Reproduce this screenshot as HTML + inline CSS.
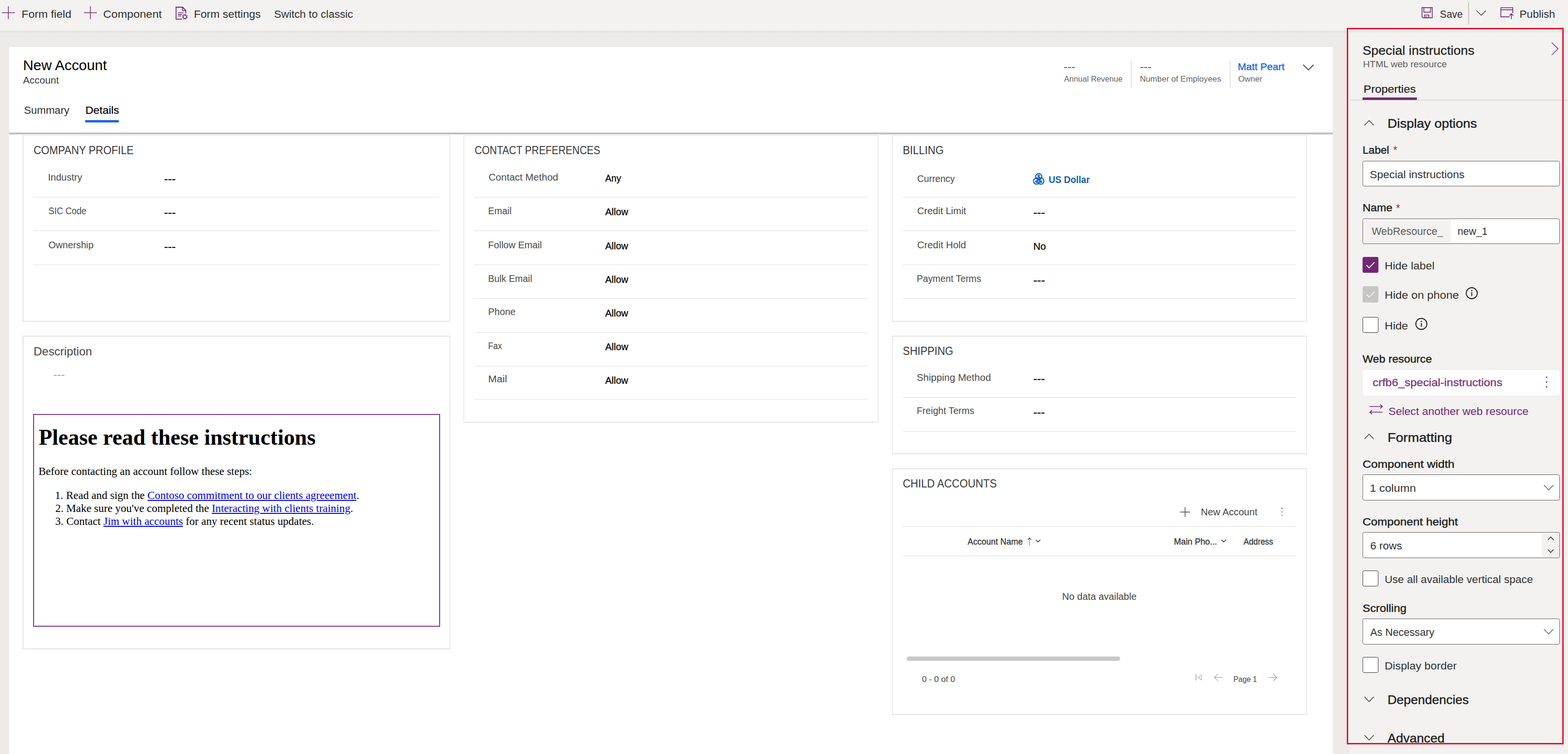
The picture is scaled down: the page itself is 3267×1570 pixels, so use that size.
<!DOCTYPE html>
<html lang="en"><head><meta charset="utf-8"><title>Form designer - New Account</title>
<style>
html,body{margin:0;padding:0;}
body{width:3267px;height:1570px;background:#fff;font-family:"Liberation Sans", sans-serif;position:relative;}
.b{position:absolute;box-sizing:border-box;}
.t{position:absolute;white-space:pre;transform-origin:0 50%;}
.i{position:absolute;overflow:visible;}
.t a{color:#0000ee;text-decoration:underline;}
</style></head>
<body>
<div class="b" style="left:0px;top:0px;width:3267px;height:1570px;background:#edebe9;"></div>
<div class="b" style="left:19px;top:98px;width:2758px;height:1472px;background:#ffffff;"></div>
<div class="b" style="left:2811px;top:64px;width:456px;height:1506px;background:#f3f2f1;"></div>
<div class="b" style="left:0px;top:64px;width:3267px;height:7px;background:linear-gradient(#e2e1df,#edebe9);"></div>
<div class="b" style="left:2811px;top:64px;width:456px;height:7px;background:linear-gradient(#e9e8e6,#f3f2f1);"></div>
<div class="b" style="left:0px;top:0px;width:3267px;height:64px;background:#f3f2f1;"></div>
<div class="b" style="left:19px;top:276px;width:2758px;height:5px;background:linear-gradient(#c2c2c2 0%,#b6b6b6 30%,#cfcfcf 60%,#f2f2f2 100%);"></div>
<div class="b" style="left:3059px;top:4px;width:2px;height:47px;background:#c8c6c4;"></div>
<div class="b" style="left:177.3px;top:250.3px;width:71.1px;height:4.8px;background:#2266e3;border-radius:2.4px;"></div>
<div class="b" style="left:2356px;top:126px;width:2px;height:56px;background:#e2e2e2;"></div>
<div class="b" style="left:2562px;top:126px;width:2px;height:56px;background:#e2e2e2;"></div>
<div class="b" style="left:47px;top:282px;width:891px;height:1px;background:#e6e5e4;"></div>
<div class="b" style="left:47px;top:668px;width:891px;height:2px;background:#e6e5e4;"></div>
<div class="b" style="left:47px;top:282px;width:2px;height:388px;background:#e2e2e2;"></div>
<div class="b" style="left:937px;top:282px;width:1px;height:388px;background:#d9d9d9;"></div>
<div class="b" style="left:69.3px;top:410px;width:846.7px;height:1px;background:#dedede;"></div>
<div class="b" style="left:69.3px;top:480px;width:846.7px;height:1px;background:#dedede;"></div>
<div class="b" style="left:69.3px;top:551px;width:846.7px;height:1px;background:#dedede;"></div>
<div class="b" style="left:47px;top:699px;width:891px;height:2px;background:#e6e5e4;"></div>
<div class="b" style="left:47px;top:1350px;width:891px;height:2px;background:#e6e5e4;"></div>
<div class="b" style="left:47px;top:699px;width:2px;height:653px;background:#e2e2e2;"></div>
<div class="b" style="left:937px;top:699px;width:1px;height:653px;background:#d9d9d9;"></div>
<div class="b" style="left:69px;top:862px;width:848px;height:443px;background:#fff;border:2px solid #7b3a80;"></div>
<div class="b" style="left:966px;top:282px;width:864px;height:1px;background:#e6e5e4;"></div>
<div class="b" style="left:966px;top:878px;width:864px;height:2px;background:#e6e5e4;"></div>
<div class="b" style="left:966px;top:282px;width:1px;height:598px;background:#d9d9d9;"></div>
<div class="b" style="left:1829px;top:282px;width:1px;height:598px;background:#d9d9d9;"></div>
<div class="b" style="left:988.2px;top:410px;width:820px;height:1px;background:#dedede;"></div>
<div class="b" style="left:988.2px;top:480px;width:820px;height:1px;background:#dedede;"></div>
<div class="b" style="left:988.2px;top:551px;width:820px;height:1px;background:#dedede;"></div>
<div class="b" style="left:988.2px;top:621px;width:820px;height:1px;background:#dedede;"></div>
<div class="b" style="left:988.2px;top:692px;width:820px;height:1px;background:#dedede;"></div>
<div class="b" style="left:988.2px;top:762px;width:820px;height:1px;background:#dedede;"></div>
<div class="b" style="left:988.2px;top:831px;width:820px;height:1px;background:#dedede;"></div>
<div class="b" style="left:1859px;top:282px;width:864px;height:1px;background:#e6e5e4;"></div>
<div class="b" style="left:1859px;top:668px;width:864px;height:2px;background:#e6e5e4;"></div>
<div class="b" style="left:1859px;top:282px;width:1px;height:388px;background:#d9d9d9;"></div>
<div class="b" style="left:2722px;top:282px;width:1px;height:388px;background:#d9d9d9;"></div>
<div class="b" style="left:1881px;top:410px;width:820px;height:1px;background:#dedede;"></div>
<div class="b" style="left:1881px;top:480px;width:820px;height:1px;background:#dedede;"></div>
<div class="b" style="left:1881px;top:551px;width:820px;height:1px;background:#dedede;"></div>
<div class="b" style="left:1881px;top:621px;width:820px;height:1px;background:#dedede;"></div>
<div class="b" style="left:1859px;top:699px;width:864px;height:2px;background:#e6e5e4;"></div>
<div class="b" style="left:1859px;top:944px;width:864px;height:2px;background:#e6e5e4;"></div>
<div class="b" style="left:1859px;top:699px;width:1px;height:247px;background:#d9d9d9;"></div>
<div class="b" style="left:2722px;top:699px;width:1px;height:247px;background:#d9d9d9;"></div>
<div class="b" style="left:1881px;top:827px;width:820px;height:1px;background:#dedede;"></div>
<div class="b" style="left:1881px;top:898px;width:820px;height:1px;background:#dedede;"></div>
<div class="b" style="left:1859px;top:975px;width:864px;height:2px;background:#e6e5e4;"></div>
<div class="b" style="left:1859px;top:1487px;width:864px;height:2px;background:#e6e5e4;"></div>
<div class="b" style="left:1859px;top:975px;width:1px;height:514px;background:#d9d9d9;"></div>
<div class="b" style="left:2722px;top:975px;width:1px;height:514px;background:#d9d9d9;"></div>
<div class="b" style="left:2669.8px;top:1057.4px;width:2.4px;height:2.4px;background:#444;border-radius:1.2px;"></div>
<div class="b" style="left:2669.8px;top:1064.7px;width:2.4px;height:2.4px;background:#444;border-radius:1.2px;"></div>
<div class="b" style="left:2669.8px;top:1072px;width:2.4px;height:2.4px;background:#444;border-radius:1.2px;"></div>
<div class="b" style="left:1881px;top:1096px;width:820px;height:1px;background:#dedede;"></div>
<div class="b" style="left:1881px;top:1157px;width:820px;height:1px;background:#dedede;"></div>
<div class="b" style="left:1889.3px;top:1367px;width:445px;height:9px;background:#c8c8c8;border-radius:4.5px;"></div>
<div class="b" style="left:2812px;top:207.6px;width:455px;height:1.4px;background:#c8c6c4;"></div>
<div class="b" style="left:2839.2px;top:203.1px;width:112.7px;height:4.7px;background:#742774;"></div>
<div class="b" style="left:2839px;top:335px;width:411px;height:53px;background:#fff;border:1.7px solid #605e5c;border-radius:3.5px;"></div>
<div class="b" style="left:2839px;top:455px;width:411px;height:53px;background:#fff;border:1.7px solid #605e5c;border-radius:3.5px;"></div>
<div class="b" style="left:2840.7px;top:456.7px;width:182px;height:49.6px;background:#f3f2f1;border-radius:2px;"></div>
<div class="b" style="left:2839px;top:535px;width:33px;height:33px;background:#742774;border-radius:3.5px;"></div>
<div class="b" style="left:2839px;top:596px;width:33px;height:34px;background:#c8c6c4;border-radius:3.5px;"></div>
<div class="b" style="left:2839px;top:660px;width:33px;height:33px;background:#fff;border:1.5px solid #323130;border-radius:3.5px;"></div>
<div class="b" style="left:2839.4px;top:769.7px;width:410.3px;height:54.6px;background:#fff;border-radius:5px;box-shadow:0 0 2px rgba(0,0,0,.12);"></div>
<div class="b" style="left:3220.7px;top:783.6px;width:3.4px;height:3.4px;background:#742774;border-radius:1.7px;"></div>
<div class="b" style="left:3220.7px;top:793.7px;width:3.4px;height:3.4px;background:#742774;border-radius:1.7px;"></div>
<div class="b" style="left:3220.7px;top:803.7px;width:3.4px;height:3.4px;background:#742774;border-radius:1.7px;"></div>
<div class="b" style="left:2839px;top:988.3px;width:411px;height:53.5px;background:#fff;border:1.7px solid #605e5c;border-radius:3.5px;"></div>
<div class="b" style="left:2839px;top:1108.2px;width:411px;height:53.5px;background:#fff;border:1.7px solid #605e5c;border-radius:3.5px;"></div>
<div class="b" style="left:3212px;top:1109.9px;width:36.3px;height:50.1px;background:#f3f2f1;border-radius:2px;"></div>
<div class="b" style="left:2839px;top:1188px;width:33px;height:33px;background:#fff;border:1.5px solid #323130;border-radius:3.5px;"></div>
<div class="b" style="left:2839px;top:1288px;width:411px;height:53.5px;background:#fff;border:1.7px solid #605e5c;border-radius:3.5px;"></div>
<div class="b" style="left:2839px;top:1368px;width:33px;height:33px;background:#fff;border:1.5px solid #323130;border-radius:3.5px;"></div>
<div class="b" style="left:2809px;top:64px;width:1px;height:1506px;background:#f6f6f5;"></div>
<div class="b" style="left:2810px;top:64px;width:1px;height:1506px;background:#e3e2e0;"></div>
<div class="b" style="left:2806px;top:58px;width:452px;height:1492px;border:3px solid #ec1030;z-index:5"></div>
<svg class="i" style="left:4.2px;top:13px" width="26.8" height="26.8" viewBox="0 0 26.8 26.8" ><path d="M13.4 0V26.8M0 13.4H26.8" stroke="#742774" stroke-width="1.5" fill="none"/></svg>
<svg class="i" style="left:175px;top:13px" width="26.8" height="26.8" viewBox="0 0 26.8 26.8" ><path d="M13.4 0V26.8M0 13.4H26.8" stroke="#742774" stroke-width="1.5" fill="none"/></svg>
<svg class="i" style="left:2458.9px;top:1055.5px" width="20.4" height="20.4" viewBox="0 0 20.4 20.4" ><path d="M10.2 0V20.4M0 10.2H20.4" stroke="#444" stroke-width="1.4" fill="none"/></svg>
<svg class="i" style="left:2842.6px;top:250.7px" width="19.2" height="10" viewBox="0 0 19.2 10" ><path d="M0 10.0L9.600000000000136 0L19.200000000000273 10.0" stroke="#323130" stroke-width="1.3" fill="none"/></svg>
<svg class="i" style="left:2839px;top:535px" width="33" height="33" viewBox="0 0 33 33" ><path d="M8.2 17.2L13.6 22.6L24.8 11.2" stroke="#fff" stroke-width="2" fill="none"/></svg>
<svg class="i" style="left:2839px;top:596px" width="33" height="33" viewBox="0 0 33 33" ><path d="M8.2 17.2L13.6 22.6L24.8 11.2" stroke="#f3f2f1" stroke-width="2" fill="none"/></svg>
<svg class="i" style="left:3054px;top:598px" width="25" height="25" viewBox="0 0 25 25" ><circle cx="12.5" cy="12.5" r="11.5" stroke="#111" stroke-width="1.8" fill="none"/><path d="M12.5 10.5V18.5" stroke="#111" stroke-width="1.9" fill="none"/><circle cx="12.5" cy="7.3" r="1.3" fill="#111"/></svg>
<svg class="i" style="left:2948.6px;top:662.1px" width="25" height="25" viewBox="0 0 25 25" ><circle cx="12.5" cy="12.5" r="11.5" stroke="#111" stroke-width="1.8" fill="none"/><path d="M12.5 10.5V18.5" stroke="#111" stroke-width="1.9" fill="none"/><circle cx="12.5" cy="7.3" r="1.3" fill="#111"/></svg>
<svg class="i" style="left:2842.6px;top:904px" width="19.2" height="10" viewBox="0 0 19.2 10" ><path d="M0 10L9.600000000000136 0L19.200000000000273 10" stroke="#323130" stroke-width="1.3" fill="none"/></svg>
<svg class="i" style="left:3217.3px;top:1009.8px" width="19.5" height="10.2" viewBox="0 0 19.5 10.2" ><path d="M0 0L9.75 10.200000000000045L19.5 0" stroke="#605e5c" stroke-width="1.5" fill="none"/></svg>
<svg class="i" style="left:3225.1px;top:1117.6px" width="12" height="6.4" viewBox="0 0 12 6.4" ><path d="M0 6.400000000000091L6.0 0L12.0 6.400000000000091" stroke="#444" stroke-width="1.8" fill="none"/></svg>
<svg class="i" style="left:3225.1px;top:1143.8px" width="12" height="6.4" viewBox="0 0 12 6.4" ><path d="M0 0L6.0 6.400000000000091L12.0 0" stroke="#444" stroke-width="1.8" fill="none"/></svg>
<svg class="i" style="left:3217.3px;top:1310px" width="19.5" height="10.2" viewBox="0 0 19.5 10.2" ><path d="M0 0L9.75 10.200000000000045L19.5 0" stroke="#605e5c" stroke-width="1.5" fill="none"/></svg>
<svg class="i" style="left:2842.6px;top:1451.3px" width="19.2" height="10" viewBox="0 0 19.2 10" ><path d="M0 0L9.600000000000136 10.0L19.200000000000273 0" stroke="#323130" stroke-width="1.3" fill="none"/></svg>
<svg class="i" style="left:2842.6px;top:1531px" width="19.2" height="10" viewBox="0 0 19.2 10" ><path d="M0 0L9.600000000000136 10L19.200000000000273 0" stroke="#323130" stroke-width="1.3" fill="none"/></svg>
<svg class="i" style="left:0;top:0" width="3267" height="1570" viewBox="0 0 3267 1570"><path d="M379.3 39.9H366.8V15H380.6L387.1 21.6V27.7 M380.4 15V21.9H387.1" stroke="#742774" stroke-width="1.8" fill="none" /><path d="M370.8 26.5H382.6M370.8 30.1H378.8M370.8 33.3H377.5" stroke="#742774" stroke-width="1.6" fill="none" /><circle cx="385.2" cy="35.0" r="3.4" stroke="#742774" stroke-width="1.5" fill="#f3f2f1"/><path d="M388.53 36.38L390.84 37.33M386.58 38.33L387.53 40.64M383.82 38.33L382.87 40.64M381.87 36.38L379.56 37.33M381.87 33.62L379.56 32.67M383.82 31.67L382.87 29.36M386.58 31.67L387.53 29.36M388.53 33.62L390.84 32.67" stroke="#742774" stroke-width="1.7" fill="none" /><path d="M2964.6 37.1L2962.8 35.3V15.9H2984.2V37.1Z" stroke="#742774" stroke-width="1.6" fill="none" /><path d="M2966.6 15.9V25.4H2980.6V15.9" stroke="#742774" stroke-width="1.6" fill="none" /><path d="M2968.3 37.1V31.2H2977V37.1M2971.3 37.1V33.6" stroke="#742774" stroke-width="1.6" fill="none" /><path d="M3076.4 22.3L3086.2 31.7L3095.9 22.3" stroke="#3b3a39" stroke-width="1.5" fill="none" /><path d="M3145.6 35.1H3127.1V16H3151.8V27.6M3127.1 20.4H3151.8" stroke="#742774" stroke-width="1.6" fill="none" /><path d="M3149 39.8V28.8M3145 32.6L3149 28.6L3153 32.6" stroke="#742774" stroke-width="1.6" fill="none" /><path d="M2715.2 134.8L2726.1 145.6L2737 134.8" stroke="#333" stroke-width="1.8" fill="none" /><path d="M3233 88.6L3246.4 101.5L3233 114.4" stroke="#742774" stroke-width="1.4" fill="none" /><circle cx="2164.3" cy="367.8" r="6.4" stroke="#115ebb" stroke-width="2.2" fill="none"/><circle cx="2159.8" cy="377.1" r="6.4" stroke="#115ebb" stroke-width="2.2" fill="none"/><circle cx="2168.8" cy="377.1" r="6.4" stroke="#115ebb" stroke-width="2.2" fill="none"/><text x="2164.3" y="371.6" font-size="11" font-weight="700" text-anchor="middle" fill="#115ebb" stroke="#115ebb" stroke-width="0.4" font-family="Liberation Sans, sans-serif">$</text><text x="2159.6" y="380.6" font-size="9.5" font-weight="700" text-anchor="middle" fill="#115ebb" stroke="#115ebb" stroke-width="0.5" font-family="Liberation Sans, sans-serif">€</text><text x="2169" y="380.6" font-size="9.5" font-weight="700" text-anchor="middle" fill="#115ebb" stroke="#115ebb" stroke-width="0.5" font-family="Liberation Sans, sans-serif">¥</text><path d="M2853.8 846.5H2880.3M2875.6 842.4L2880.3 846.5L2875.6 850.6" stroke="#6b1f6e" stroke-width="1.6" fill="none" /><path d="M2880.7 858.3H2854.2M2858.9 854.2L2854.2 858.3L2858.9 862.4" stroke="#6b1f6e" stroke-width="1.6" fill="none" /><path d="M2144.9 1135.7V1121" stroke="#a0a0a0" stroke-width="1.7" fill="none" /><path d="M2141.2 1124L2144.9 1120.4L2148.6 1124" stroke="#555" stroke-width="1.5" fill="none" /><path d="M2158.2 1124L2162.8 1128.4L2167.4 1124" stroke="#555" stroke-width="1.9" fill="none" /><path d="M2544.6 1124L2549.7 1128.4L2554.7 1124" stroke="#555" stroke-width="1.9" fill="none" /><path d="M2491.8 1404.2V1416.8" stroke="#b4b4b4" stroke-width="2" fill="none" /><path d="M2503.6 1405.2L2496.3 1410.5L2503.6 1415.8Z" stroke="#b0b0b0" stroke-width="1.3" fill="none" /><path d="M2546.7 1410.5H2530.2M2537.9 1403.1L2530.2 1410.5L2537.9 1417.9" stroke="#a6a6a6" stroke-width="1.3" fill="none" /><path d="M2643.7 1410.5H2660.3M2652.6 1403.1L2660.3 1410.5L2652.6 1417.9" stroke="#a6a6a6" stroke-width="1.3" fill="none" /></svg>
<span class="t" style="left:44.89px;top:20.15px;font-size:21.5px;line-height:21.5px;color:#323130;transform:scaleX(1.0860);">Form field</span>
<span class="t" style="left:215.12px;top:19.62px;font-size:21.5px;line-height:21.5px;color:#323130;transform:scaleX(1.0984);">Component</span>
<span class="t" style="left:404.24px;top:19.54px;font-size:21.5px;line-height:21.5px;color:#323130;transform:scaleX(1.0698);">Form settings</span>
<span class="t" style="left:571.07px;top:19.67px;font-size:21.5px;line-height:21.5px;color:#323130;transform:scaleX(1.0434);">Switch to classic</span>
<span class="t" style="left:3000.00px;top:19.61px;font-size:21.5px;line-height:21.5px;color:#323130;transform:scaleX(0.9695);">Save</span>
<span class="t" style="left:3165.90px;top:19.53px;font-size:21.5px;line-height:21.5px;color:#323130;transform:scaleX(1.0518);">Publish</span>
<span class="t" style="left:48.01px;top:120.12px;font-size:30.4px;line-height:30.4px;color:#000;transform:scaleX(0.9842);">New Account</span>
<span class="t" style="left:47.90px;top:157.85px;font-size:19.5px;line-height:19.5px;color:#3c3c3c;transform:scaleX(1.0598);">Account</span>
<span class="t" style="left:49.66px;top:218.80px;font-size:21.9px;line-height:21.9px;color:#333;transform:scaleX(1.0096);">Summary</span>
<span class="t" style="left:178.15px;top:218.98px;font-size:21.9px;line-height:21.9px;color:#000;transform:scaleX(1.0489);-webkit-text-stroke:0.2px #000;">Details</span>
<span class="t" style="left:2216.28px;top:131.94px;font-size:16px;line-height:16px;color:#000;transform:scaleX(1.5310);">---</span>
<span class="t" style="left:2216.80px;top:155.79px;font-size:17px;line-height:17px;color:#666;transform:scaleX(0.9700);">Annual Revenue</span>
<span class="t" style="left:2374.87px;top:131.74px;font-size:16px;line-height:16px;color:#000;transform:scaleX(1.5145);">---</span>
<span class="t" style="left:2375.08px;top:155.61px;font-size:17px;line-height:17px;color:#666;transform:scaleX(1.0063);">Number of Employees</span>
<span class="t" style="left:2579.24px;top:128.81px;font-size:20.3px;line-height:20.3px;color:#1164eb;transform:scaleX(1.0403);-webkit-text-stroke:0.35px #1164eb;">Matt Peart</span>
<span class="t" style="left:2580.08px;top:155.52px;font-size:17px;line-height:17px;color:#666;transform:scaleX(1.0032);">Owner</span>
<span class="t" style="left:70.06px;top:302.47px;font-size:23.3px;line-height:23.3px;color:#3a3a3a;transform:scaleX(0.9398);">COMPANY PROFILE</span>
<span class="t" style="left:99.86px;top:360.33px;font-size:19.6px;line-height:19.6px;color:#4a4a4a;transform:scaleX(1.0219);">Industry</span>
<span class="t" style="left:341.64px;top:362.39px;font-size:22px;line-height:22px;color:#000;transform:scaleX(1.0884);-webkit-text-stroke:0.35px #000;">---</span>
<span class="t" style="left:100.71px;top:430.41px;font-size:19.6px;line-height:19.6px;color:#4a4a4a;transform:scaleX(0.9290);">SIC Code</span>
<span class="t" style="left:341.64px;top:432.39px;font-size:22px;line-height:22px;color:#000;transform:scaleX(1.0884);-webkit-text-stroke:0.35px #000;">---</span>
<span class="t" style="left:100.51px;top:500.73px;font-size:19.6px;line-height:19.6px;color:#4a4a4a;transform:scaleX(1.0024);">Ownership</span>
<span class="t" style="left:341.68px;top:502.52px;font-size:22px;line-height:22px;color:#000;transform:scaleX(1.0885);-webkit-text-stroke:0.35px #000;">---</span>
<span class="t" style="left:70.06px;top:720.20px;font-size:24px;line-height:24px;color:#444;transform:scaleX(1.0151);">Description</span>
<span class="t" style="left:111.16px;top:771.96px;font-size:17px;line-height:17px;color:#7a7a7a;transform:scaleX(1.4325);">---</span>
<span class="t" style="left:80.78px;top:887.95px;font-size:45.92px;line-height:45.92px;color:#000;font-weight:700;font-family:'Liberation Serif', serif;">Please read these instructions</span>
<span class="t" style="left:80.32px;top:970.67px;font-size:22.96px;line-height:22.96px;color:#000;font-family:'Liberation Serif', serif;">Before contacting an account follow these steps:</span>
<span class="t" style="left:114.55px;top:1020.81px;font-size:22.96px;line-height:22.96px;color:#000;font-family:'Liberation Serif', serif;">1.</span>
<span class="t" style="left:115.17px;top:1048.11px;font-size:22.96px;line-height:22.96px;color:#000;font-family:'Liberation Serif', serif;">2.</span>
<span class="t" style="left:115.04px;top:1074.59px;font-size:22.96px;line-height:22.96px;color:#000;font-family:'Liberation Serif', serif;">3.</span>
<span class="t" style="left:137.73px;top:1020.81px;font-size:22.96px;line-height:22.96px;color:#000;font-family:'Liberation Serif', serif;">Read and sign the <a>Contoso commitment to our clients agreeement</a>.</span>
<span class="t" style="left:138.12px;top:1048.00px;font-size:22.96px;line-height:22.96px;color:#000;font-family:'Liberation Serif', serif;">Make sure you've completed the <a>Interacting with clients training</a>.</span>
<span class="t" style="left:138.32px;top:1074.59px;font-size:22.96px;line-height:22.96px;color:#000;font-family:'Liberation Serif', serif;">Contact <a>Jim with accounts</a> for any recent status updates.</span>
<span class="t" style="left:988.61px;top:301.90px;font-size:23.3px;line-height:23.3px;color:#3a3a3a;transform:scaleX(0.8969);">CONTACT PREFERENCES</span>
<span class="t" style="left:1017.62px;top:360.48px;font-size:19.6px;line-height:19.6px;color:#4a4a4a;transform:scaleX(1.0483);">Contact Method</span>
<span class="t" style="left:1260.90px;top:361.80px;font-size:19.6px;line-height:19.6px;color:#000;transform:scaleX(0.9771);-webkit-text-stroke:0.3px #000;">Any</span>
<span class="t" style="left:1016.69px;top:430.30px;font-size:19.6px;line-height:19.6px;color:#4a4a4a;transform:scaleX(0.9956);">Email</span>
<span class="t" style="left:1260.90px;top:431.80px;font-size:19.6px;line-height:19.6px;color:#000;transform:scaleX(1.0217);-webkit-text-stroke:0.3px #000;">Allow</span>
<span class="t" style="left:1017.47px;top:500.74px;font-size:19.6px;line-height:19.6px;color:#4a4a4a;transform:scaleX(1.0086);">Follow Email</span>
<span class="t" style="left:1260.85px;top:502.93px;font-size:19.6px;line-height:19.6px;color:#000;transform:scaleX(1.0214);-webkit-text-stroke:0.3px #000;">Allow</span>
<span class="t" style="left:1017.31px;top:571.30px;font-size:19.6px;line-height:19.6px;color:#4a4a4a;transform:scaleX(0.9909);">Bulk Email</span>
<span class="t" style="left:1260.90px;top:572.80px;font-size:19.6px;line-height:19.6px;color:#000;transform:scaleX(1.0217);-webkit-text-stroke:0.3px #000;">Allow</span>
<span class="t" style="left:1017.47px;top:639.98px;font-size:19.6px;line-height:19.6px;color:#4a4a4a;transform:scaleX(1.0100);">Phone</span>
<span class="t" style="left:1260.73px;top:642.61px;font-size:19.6px;line-height:19.6px;color:#000;transform:scaleX(1.0212);-webkit-text-stroke:0.3px #000;">Allow</span>
<span class="t" style="left:1016.97px;top:710.63px;font-size:19.6px;line-height:19.6px;color:#4a4a4a;transform:scaleX(0.8885);">Fax</span>
<span class="t" style="left:1260.90px;top:712.90px;font-size:19.6px;line-height:19.6px;color:#000;transform:scaleX(1.0217);-webkit-text-stroke:0.3px #000;">Allow</span>
<span class="t" style="left:1017.14px;top:779.70px;font-size:19.6px;line-height:19.6px;color:#4a4a4a;transform:scaleX(1.1003);">Mail</span>
<span class="t" style="left:1260.73px;top:782.61px;font-size:19.6px;line-height:19.6px;color:#000;transform:scaleX(1.0212);-webkit-text-stroke:0.3px #000;">Allow</span>
<span class="t" style="left:1880.90px;top:302.42px;font-size:23.3px;line-height:23.3px;color:#3a3a3a;transform:scaleX(0.9552);">BILLING</span>
<span class="t" style="left:1911.17px;top:362.73px;font-size:19.6px;line-height:19.6px;color:#4a4a4a;transform:scaleX(0.9872);">Currency</span>
<span class="t" style="left:2185.22px;top:364.75px;font-size:19.6px;line-height:19.6px;color:#115ebb;transform:scaleX(0.9703);font-weight:700;">US Dollar</span>
<span class="t" style="left:1911.05px;top:430.48px;font-size:19.6px;line-height:19.6px;color:#4a4a4a;transform:scaleX(1.0291);">Credit Limit</span>
<span class="t" style="left:2153.15px;top:432.31px;font-size:22px;line-height:22px;color:#000;transform:scaleX(1.1009);-webkit-text-stroke:0.35px #000;">---</span>
<span class="t" style="left:1911.03px;top:500.73px;font-size:19.6px;line-height:19.6px;color:#4a4a4a;transform:scaleX(1.0393);">Credit Hold</span>
<span class="t" style="left:2152.88px;top:504.40px;font-size:19.6px;line-height:19.6px;color:#000;transform:scaleX(1.0433);-webkit-text-stroke:0.3px #000;">No</span>
<span class="t" style="left:1910.14px;top:571.31px;font-size:19.6px;line-height:19.6px;color:#4a4a4a;transform:scaleX(0.9883);">Payment Terms</span>
<span class="t" style="left:2153.15px;top:573.31px;font-size:22px;line-height:22px;color:#000;transform:scaleX(1.1009);-webkit-text-stroke:0.35px #000;">---</span>
<span class="t" style="left:1880.86px;top:720.09px;font-size:23.3px;line-height:23.3px;color:#3a3a3a;transform:scaleX(0.9445);">SHIPPING</span>
<span class="t" style="left:1910.05px;top:776.64px;font-size:19.6px;line-height:19.6px;color:#4a4a4a;transform:scaleX(1.0520);">Shipping Method</span>
<span class="t" style="left:2153.07px;top:778.11px;font-size:22px;line-height:22px;color:#000;transform:scaleX(1.0958);-webkit-text-stroke:0.35px #000;">---</span>
<span class="t" style="left:1910.05px;top:846.42px;font-size:19.6px;line-height:19.6px;color:#4a4a4a;transform:scaleX(1.0040);">Freight Terms</span>
<span class="t" style="left:2153.07px;top:848.11px;font-size:22px;line-height:22px;color:#000;transform:scaleX(1.0958);-webkit-text-stroke:0.35px #000;">---</span>
<span class="t" style="left:1881.41px;top:995.58px;font-size:23.3px;line-height:23.3px;color:#3a3a3a;transform:scaleX(0.9517);">CHILD ACCOUNTS</span>
<span class="t" style="left:2502.05px;top:1056.66px;font-size:19.6px;line-height:19.6px;color:#444;transform:scaleX(1.0316);">New Account</span>
<span class="t" style="left:2016.30px;top:1118.96px;font-size:18px;line-height:18px;color:#333;transform:scaleX(0.9741);-webkit-text-stroke:0.3px #333;">Account Name</span>
<span class="t" style="left:2446.02px;top:1118.96px;font-size:18px;line-height:18px;color:#333;transform:scaleX(0.9859);-webkit-text-stroke:0.3px #333;">Main Pho...</span>
<span class="t" style="left:2591.00px;top:1118.96px;font-size:18px;line-height:18px;color:#333;transform:scaleX(0.9338);-webkit-text-stroke:0.3px #333;">Address</span>
<span class="t" style="left:2212.66px;top:1232.68px;font-size:19.6px;line-height:19.6px;color:#444;transform:scaleX(1.0246);">No data available</span>
<span class="t" style="left:1920.95px;top:1406.29px;font-size:17px;line-height:17px;color:#444;transform:scaleX(1.0292);">0 - 0 of 0</span>
<span class="t" style="left:2569.72px;top:1405.61px;font-size:17px;line-height:17px;color:#444;transform:scaleX(0.9088);">Page 1</span>
<span class="t" style="left:2838.88px;top:91.94px;font-size:26.6px;line-height:26.6px;color:#201f1e;transform:scaleX(1.0170);-webkit-text-stroke:0.3px #201f1e;">Special instructions</span>
<span class="t" style="left:2839.93px;top:124.91px;font-size:18.5px;line-height:18.5px;color:#605e5c;transform:scaleX(1.0521);">HTML web resource</span>
<span class="t" style="left:2840.84px;top:175.03px;font-size:22.5px;line-height:22.5px;color:#201f1e;transform:scaleX(1.0616);-webkit-text-stroke:0.25px #201f1e;">Properties</span>
<span class="t" style="left:2890.83px;top:244.08px;font-size:26px;line-height:26px;color:#201f1e;transform:scaleX(1.0560);-webkit-text-stroke:0.45px #201f1e;">Display options</span>
<span class="t" style="left:2839.30px;top:302.90px;font-size:21.3px;line-height:21.3px;color:#201f1e;transform:scaleX(1.0624);-webkit-text-stroke:0.45px #201f1e;">Label</span>
<span class="t" style="left:2902.84px;top:301.15px;font-size:24px;line-height:24px;color:#a4262c;transform:scaleX(0.8485);">*</span>
<span class="t" style="left:2854.22px;top:353.75px;font-size:21.5px;line-height:21.5px;color:#323130;transform:scaleX(1.0658);">Special instructions</span>
<span class="t" style="left:2839.34px;top:423.31px;font-size:21.3px;line-height:21.3px;color:#201f1e;transform:scaleX(1.0959);-webkit-text-stroke:0.45px #201f1e;">Name</span>
<span class="t" style="left:2909.27px;top:422.19px;font-size:24px;line-height:24px;color:#a4262c;transform:scaleX(0.8498);">*</span>
<span class="t" style="left:2857.77px;top:472.46px;font-size:21.5px;line-height:21.5px;color:#605e5c;transform:scaleX(1.0075);">WebResource_</span>
<span class="t" style="left:3036.99px;top:472.46px;font-size:21.5px;line-height:21.5px;color:#323130;transform:scaleX(0.9804);">new_1</span>
<span class="t" style="left:2885.07px;top:543.75px;font-size:21.5px;line-height:21.5px;color:#323130;transform:scaleX(1.0876);">Hide label</span>
<span class="t" style="left:2884.95px;top:605.40px;font-size:21.5px;line-height:21.5px;color:#323130;transform:scaleX(1.1055);">Hide on phone</span>
<span class="t" style="left:2884.70px;top:668.53px;font-size:21.5px;line-height:21.5px;color:#323130;transform:scaleX(1.1042);">Hide</span>
<span class="t" style="left:2839.32px;top:738.27px;font-size:21.3px;line-height:21.3px;color:#201f1e;transform:scaleX(1.0927);-webkit-text-stroke:0.45px #201f1e;">Web resource</span>
<span class="t" style="left:2859.65px;top:786.56px;font-size:21.5px;line-height:21.5px;color:#80397b;transform:scaleX(1.1136);-webkit-text-stroke:0.45px #80397b;">crfb6_special-instructions</span>
<span class="t" style="left:2893.39px;top:846.74px;font-size:21.5px;line-height:21.5px;color:#742774;transform:scaleX(1.0658);">Select another web resource</span>
<span class="t" style="left:2890.72px;top:898.08px;font-size:26px;line-height:26px;color:#201f1e;transform:scaleX(1.0831);-webkit-text-stroke:0.45px #201f1e;">Formatting</span>
<span class="t" style="left:2838.68px;top:957.10px;font-size:21.3px;line-height:21.3px;color:#201f1e;transform:scaleX(1.1557);-webkit-text-stroke:0.45px #201f1e;">Component width</span>
<span class="t" style="left:2853.80px;top:1006.90px;font-size:21.5px;line-height:21.5px;color:#323130;transform:scaleX(1.1028);">1 column</span>
<span class="t" style="left:2838.80px;top:1076.69px;font-size:21.3px;line-height:21.3px;color:#201f1e;transform:scaleX(1.1400);-webkit-text-stroke:0.45px #201f1e;">Component height</span>
<span class="t" style="left:2854.82px;top:1126.80px;font-size:21.5px;line-height:21.5px;color:#323130;transform:scaleX(1.0475);">6 rows</span>
<span class="t" style="left:2885.28px;top:1196.76px;font-size:21.5px;line-height:21.5px;color:#323130;transform:scaleX(1.0510);">Use all available vertical space</span>
<span class="t" style="left:2839.14px;top:1257.29px;font-size:21.3px;line-height:21.3px;color:#201f1e;transform:scaleX(1.1195);-webkit-text-stroke:0.45px #201f1e;">Scrolling</span>
<span class="t" style="left:2854.90px;top:1306.82px;font-size:21.5px;line-height:21.5px;color:#323130;transform:scaleX(1.0062);">As Necessary</span>
<span class="t" style="left:2884.94px;top:1376.55px;font-size:21.5px;line-height:21.5px;color:#323130;transform:scaleX(1.0837);">Display border</span>
<span class="t" style="left:2890.96px;top:1443.98px;font-size:26px;line-height:26px;color:#201f1e;transform:scaleX(1.0180);-webkit-text-stroke:0.45px #201f1e;">Dependencies</span>
<span class="t" style="left:2890.52px;top:1523.82px;font-size:26px;line-height:26px;color:#201f1e;transform:scaleX(1.0278);-webkit-text-stroke:0.45px #201f1e;">Advanced</span>
</body></html>
